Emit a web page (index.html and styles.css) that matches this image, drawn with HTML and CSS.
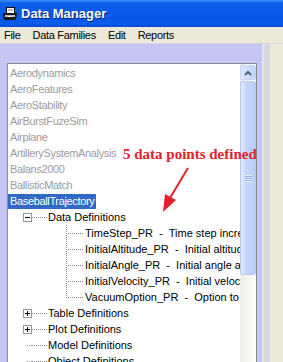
FILE: index.html
```html
<!DOCTYPE html>
<html lang="en">
<head>
    <meta charset="UTF-8">
    <title>Data Manager</title>
    <link rel="stylesheet" href="styles.css">
</head>
<body>
<div class="window">
    <div class="titlebar">
        <svg class="app-icon" width="16" height="16" viewBox="0 0 16 16">
            <rect x="4.5" y="1.5" width="8" height="7" fill="#fff" stroke="#000"/>
            <line x1="6" y1="4" x2="11" y2="4" stroke="#777"/>
            <polygon points="1,7 15,7 14,14 2,14" fill="#1a1a1a"/>
            <rect x="3" y="9" width="10" height="2" fill="#bbb"/>
            <rect x="6" y="10" width="4" height="1" fill="#fff"/>
        </svg>
        <span class="title">Data Manager</span>
    </div>
    <div class="menubar">
        <span>File</span>
        <span>Data Families</span>
        <span>Edit</span>
        <span>Reports</span>
    </div>
    <div class="workspace">
        <div class="panel">
            <div class="listbox">
                <div class="tree">
                    <div class="row family">Aerodynamics</div>
                    <div class="row family">AeroFeatures</div>
                    <div class="row family">AeroStability</div>
                    <div class="row family">AirBurstFuzeSim</div>
                    <div class="row family">Airplane</div>
                    <div class="row family">ArtillerySystemAnalysis</div>
                    <div class="row family">Balans2000</div>
                    <div class="row family">BallisticMatch</div>
                    <div class="row family"><span class="selected">BaseballTrajectory</span></div>
                    <div class="row group"><span class="expander minus"></span><span class="hline"></span><span class="label">Data Definitions</span></div>
                    <div class="row item"><span class="elbow"></span><span class="label">TimeStep_PR  -  Time step increment</span></div>
                    <div class="row item"><span class="elbow"></span><span class="label">InitialAltitude_PR  -  Initial altitude</span></div>
                    <div class="row item"><span class="elbow"></span><span class="label">InitialAngle_PR  -  Initial angle at launch</span></div>
                    <div class="row item"><span class="elbow"></span><span class="label">InitialVelocity_PR  -  Initial velocity</span></div>
                    <div class="row item last"><span class="elbow"></span><span class="label">VacuumOption_PR  -  Option to use vacuum</span></div>
                    <div class="row group"><span class="expander plus"></span><span class="hline"></span><span class="label">Table Definitions</span></div>
                    <div class="row group"><span class="expander plus"></span><span class="hline"></span><span class="label">Plot Definitions</span></div>
                    <div class="row group"><span class="stub"></span><span class="hline"></span><span class="label">Model Definitions</span></div>
                    <div class="row group"><span class="stub"></span><span class="hline"></span><span class="label">Object Definitions</span></div>
                </div>
                <div class="scrollbar">
                    <div class="scroll-btn">
                        <svg width="8" height="6" viewBox="0 0 8 6"><polyline points="1,5 4,2 7,5" fill="none" stroke="#4d6185" stroke-width="2"/></svg>
                    </div>
                    <div class="thumb"><span class="grip"></span></div>
                    <div class="track"></div>
                </div>

                <!-- annotation drawn over the tree -->
                <div class="note">5 data points defined</div>
                <svg class="arrow" width="60" height="60" viewBox="0 0 60 60">
                    <line x1="48" y1="8" x2="30" y2="38" stroke="#e3202c" stroke-width="2"/>
                    <polygon points="23,52 36,40 25,34" fill="#e3202c"/>
                </svg>
            </div>
        </div>
        <div class="splitter"></div>
        <div class="side"></div>
    </div>
</div>
</body>
</html>
```

FILE: styles.css
```css
body {
    margin: 0;
    font-family: "Liberation Sans", Arial, sans-serif;
    background-color: #ece9d8;
    overflow: hidden;
}

.window {
    width: 283px;
    height: 362px;
    display: flex;
    flex-direction: column;
}

.titlebar {
    height: 27px;
    display: flex;
    align-items: center;
    gap: 3px;
    padding-left: 2px;
    background: linear-gradient(to bottom, #3a8cfb 0, #0b5fea 12%, #0758e6 60%, #0a5bec 88%, #0748d4 100%);
}

.app-icon {
    flex: none;
}

.title {
    color: white;
    font-weight: bold;
    font-size: 13px;
    text-shadow: 1px 1px #0a1e7a;
}

.menubar {
    height: 16px;
    display: flex;
    align-items: center;
    gap: 12px;
    padding-left: 4px;
    font-size: 11px;
    letter-spacing: -0.3px;
    color: black;
    border-bottom: 1px solid #d6d3e6;
}

.workspace {
    flex: 1;
    display: flex;
    min-height: 0;
}

.panel {
    width: 262px;
    padding: 19px 5px 0 7px;
    box-sizing: border-box;
    background-color: #c5c5f3;
    display: flex;
    flex-direction: column;
}

.listbox {
    position: relative;
    flex: 1;
    display: flex;
    border: 1px solid #8a8a96;
    border-bottom: none;
    background-color: white;
    overflow: hidden;
}

.tree {
    flex: 1;
    padding-top: 1px;
    overflow: hidden;
    font-size: 11px;
}

.row {
    height: 16px;
    display: flex;
    align-items: center;
    white-space: pre;
    color: black;
}

.family {
    padding-left: 2px;
    letter-spacing: -0.35px;
    color: #9c9c9c;
}

.selected {
    margin-left: -2px;
    padding: 0 2px 0 2px;
    height: 15px;
    line-height: 15px;
    background-color: #316ac5;
    color: white;
}

.group {
    padding-left: 15px;
}

.expander {
    flex: none;
    width: 7px;
    height: 7px;
    border: 1px solid #919b9c;
    background-color: white;
}

.minus {
    background: linear-gradient(#000, #000) center / 5px 1px no-repeat, white;
}

.plus {
    background: linear-gradient(#000, #000) center / 5px 1px no-repeat,
                linear-gradient(#000, #000) center / 1px 5px no-repeat, white;
}

.stub {
    flex: none;
    width: 9px;
    height: 1px;
    background: repeating-linear-gradient(to right, #8c8c8c 0 1px, transparent 1px 2px) 4px 0 / 5px 1px no-repeat;
}

.hline {
    flex: none;
    width: 15px;
    height: 1px;
    background: repeating-linear-gradient(to right, #8c8c8c 0 1px, transparent 1px 2px);
}

.group .label {
    margin-left: 1px;
}

.item {
    padding-left: 58px;
}

.elbow {
    flex: none;
    width: 18px;
    height: 16px;
    background: repeating-linear-gradient(to right, #8c8c8c 0 1px, transparent 1px 2px) 0 8px / 100% 1px no-repeat,
                repeating-linear-gradient(to bottom, #8c8c8c 0 1px, transparent 1px 2px) 0 0 / 1px 100% no-repeat;
}

.last .elbow {
    background: repeating-linear-gradient(to right, #8c8c8c 0 1px, transparent 1px 2px) 0 8px / 100% 1px no-repeat,
                repeating-linear-gradient(to bottom, #8c8c8c 0 1px, transparent 1px 2px) 0 0 / 1px 9px no-repeat;
}

.item .label {
    margin-left: 1px;
}

.scrollbar {
    flex: none;
    width: 16px;
    display: flex;
    flex-direction: column;
    background: linear-gradient(to right, #eeede5, #fdfdfa);
}

.scroll-btn {
    height: 15px;
    margin: 1px 0 0;
    display: flex;
    align-items: center;
    justify-content: center;
    border: 1px solid #c9d6f8;
    border-radius: 2px;
    box-sizing: border-box;
    background: linear-gradient(to right, #dfe8fd, #c1d2fb);
}

.thumb {
    height: 194px;
    margin-top: 1px;
    display: flex;
    align-items: center;
    justify-content: center;
    border: 1px solid #b6c9f5;
    border-radius: 2px;
    box-sizing: border-box;
    background: linear-gradient(to right, #e6edfd, #c4d4fc 40%, #bccefb);
}

.grip {
    width: 7px;
    height: 7px;
    background: repeating-linear-gradient(to bottom, #eef3fe 0 1px, #8ea9ea 1px 2px);
}

.track {
    flex: 1;
}

.note {
    position: absolute;
    left: 115px;
    top: 83px;
    font-family: "Liberation Serif", "Times New Roman", serif;
    font-weight: bold;
    font-size: 15px;
    line-height: 15px;
    color: #e3202c;
    white-space: nowrap;
}

.arrow {
    position: absolute;
    left: 132px;
    top: 96px;
}

.splitter {
    width: 8px;
    background: linear-gradient(to right, #e4e3ee 0 2px, #d6d6dc 2px);
}

.side {
    flex: 1;
    background-color: #ece9d8;
}
```
